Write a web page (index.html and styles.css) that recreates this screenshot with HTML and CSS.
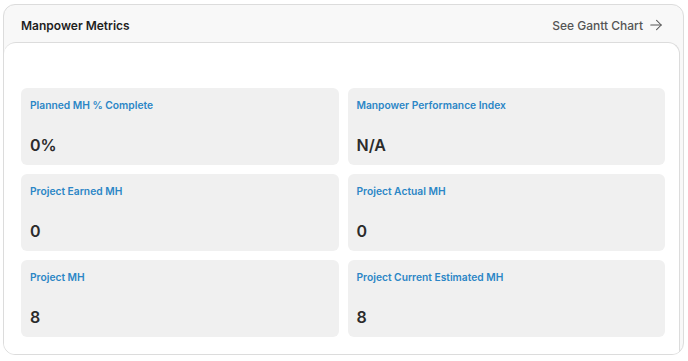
FILE: index.html
```html
<!DOCTYPE html>
<html lang="en">
<head>
    <meta charset="UTF-8">
    <meta name="viewport" content="width=device-width, initial-scale=1.0">
    <title>Manpower Metrics</title>
    <link rel="stylesheet" href="styles.css">
</head>
<body>
    <div class="card">
        <div class="card-header">
            <h2>Manpower Metrics</h2>
            <a class="gantt-link" href="#">See Gantt Chart
                <svg width="14" height="14" viewBox="0 0 24 24" fill="none" stroke="currentColor" stroke-width="1.8" stroke-linecap="round" stroke-linejoin="round"><path d="M3 12h18"/><path d="M13 4l8 8-8 8"/></svg>
            </a>
        </div>
        <div class="card-body">
            <div class="metrics">
                <div class="metric">
                    <div class="metric-label">Planned MH % Complete</div>
                    <div class="metric-value">0%</div>
                </div>
                <div class="metric">
                    <div class="metric-label">Manpower Performance Index</div>
                    <div class="metric-value">N/A</div>
                </div>
                <div class="metric">
                    <div class="metric-label">Project Earned MH</div>
                    <div class="metric-value">0</div>
                </div>
                <div class="metric">
                    <div class="metric-label">Project Actual MH</div>
                    <div class="metric-value">0</div>
                </div>
                <div class="metric">
                    <div class="metric-label">Project MH</div>
                    <div class="metric-value">8</div>
                </div>
                <div class="metric">
                    <div class="metric-label">Project Current Estimated MH</div>
                    <div class="metric-value">8</div>
                </div>
            </div>
        </div>
    </div>
</body>
</html>
```

FILE: styles.css
```css
body {
    margin: 0;
    padding: 4px 4px 0 3px;
    font-family: Inter, "Noto Sans", sans-serif;
    background-color: #fff;
}
.card {
    width: 681px;
    height: 351px;
    box-sizing: border-box;
    background-color: #f8f8f8;
    border: 1px solid #dcdcdc;
    border-radius: 12px;
    display: flex;
    flex-direction: column;
    overflow: hidden;
}
.card-header {
    height: 38px;
    box-sizing: border-box;
    display: flex;
    align-items: center;
    justify-content: space-between;
    padding: 3px 20px 0 17px;
}
.card-header h2 {
    margin: 0;
    font-size: 12px;
    font-weight: 600;
    color: #1f1f1f;
}
.gantt-link {
    display: flex;
    align-items: center;
    gap: 6px;
    font-size: 12px;
    font-weight: 500;
    color: #555;
    text-decoration: none;
}
.card-body {
    flex: 1;
    margin: 0 3px 0 0;
    background-color: #fff;
    border-top: 1px solid #dcdcdc;
    border-right: 1px solid #dcdcdc;
    border-radius: 12px 12px 0 0;
    padding: 45px 14px 17px 17px;
}
.metrics {
    display: grid;
    grid-template-columns: 1fr 1fr;
    grid-auto-rows: 77px;
    gap: 9px;
}
.metric {
    background-color: #f0f0f0;
    border-radius: 6px;
    padding: 9px 9px 10px;
    display: flex;
    flex-direction: column;
    justify-content: space-between;
}
.metric-label {
    font-size: 10.25px;
    font-weight: 600;
    line-height: 16px;
    color: #2b86c6;
}
.metric-value {
    font-size: 16px;
    font-weight: 600;
    line-height: 20px;
    color: #2b2b2b;
}
```
